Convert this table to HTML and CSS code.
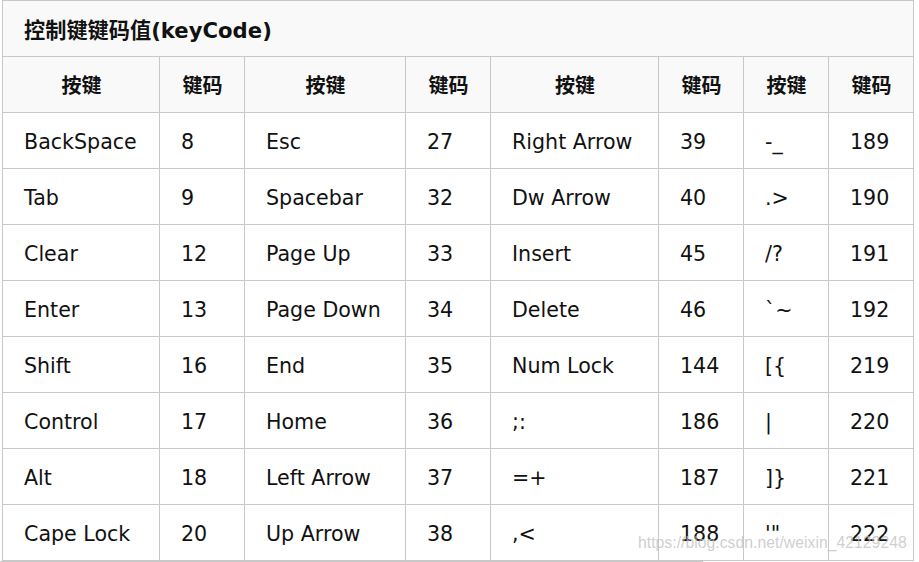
FILE: index.html
```html
<!DOCTYPE html>
<html lang="zh">
<head>
<meta charset="utf-8">
<link rel="stylesheet" href="styles.css">
</head>
<body>
<div class="wrap">
<table class="keys">
<colgroup>
<col class="c-a"><col class="c-n"><col class="c-b"><col class="c-n"><col class="c-c"><col class="c-n"><col class="c-n"><col class="c-n">
</colgroup>
<thead>
<tr class="title"><th colspan="8">控制键键码值(keyCode)</th></tr>
<tr class="head"><th>按键</th><th>键码</th><th>按键</th><th>键码</th><th>按键</th><th>键码</th><th>按键</th><th>键码</th></tr>
</thead>
<tbody>
<tr><td>BackSpace</td><td>8</td><td>Esc</td><td>27</td><td>Right Arrow</td><td>39</td><td>-_</td><td>189</td></tr>
<tr><td>Tab</td><td>9</td><td>Spacebar</td><td>32</td><td>Dw Arrow</td><td>40</td><td>.&gt;</td><td>190</td></tr>
<tr><td>Clear</td><td>12</td><td>Page Up</td><td>33</td><td>Insert</td><td>45</td><td>/?</td><td>191</td></tr>
<tr><td>Enter</td><td>13</td><td>Page Down</td><td>34</td><td>Delete</td><td>46</td><td>`~</td><td>192</td></tr>
<tr><td>Shift</td><td>16</td><td>End</td><td>35</td><td>Num Lock</td><td>144</td><td>[{</td><td>219</td></tr>
<tr><td>Control</td><td>17</td><td>Home</td><td>36</td><td>;:</td><td>186</td><td>|</td><td>220</td></tr>
<tr><td>Alt</td><td>18</td><td>Left Arrow</td><td>37</td><td>=+</td><td>187</td><td>]}</td><td>221</td></tr>
<tr><td>Cape Lock</td><td>20</td><td>Up Arrow</td><td>38</td><td>,&lt;</td><td>188</td><td>'"</td><td>222</td></tr>
</tbody>
</table>
<div class="scrollbar"></div>
<div class="watermark">https://blog.csdn.net/weixin_42129248</div>
</div>
</body>
</html>
```
FILE: styles.css
```css
html, body {
  margin: 0;
  padding: 0;
  background: #ffffff;
}
.wrap {
  position: relative;
  width: 919px;
  height: 562px;
  overflow: hidden;
}
.keys {
  margin-left: 2px;
  border-collapse: collapse;
  table-layout: fixed;
  width: 912px;
  font-family: "DejaVu Sans", Verdana, "Noto Sans CJK SC", sans-serif;
  font-size: 20.6px;
  color: #111;
}
.c-a { width: 157px; }
.c-b { width: 161px; }
.c-c { width: 168px; }
.c-n { width: 85px; }
.keys th,
.keys td {
  border: 1px solid #c8c8c8;
  padding: 0 20px 0 21px;
  height: 55px;
  white-space: nowrap;
}
.keys td {
  text-align: left;
  background: #ffffff;
  padding-top: 2px;
  height: 53px;
}
.keys th {
  background: #f9f9f9;
  text-align: center;
  font-weight: bold;
  font-family: "Noto Sans CJK SC", "DejaVu Sans", sans-serif;
  font-size: 20px;
}
.keys .title th {
  text-align: left;
  font-family: "DejaVu Sans", "Noto Sans CJK SC", sans-serif;
  font-size: 21.2px;
}
.scrollbar {
  width: 703px;
  height: 1px;
  background: #c8c8c8;
}
.watermark {
  position: absolute;
  left: 638px;
  top: 534px;
  font-family: "Liberation Sans", Arial, sans-serif;
  font-size: 15.8px;
  color: rgba(190, 190, 190, 0.75);
  white-space: nowrap;
}
```
